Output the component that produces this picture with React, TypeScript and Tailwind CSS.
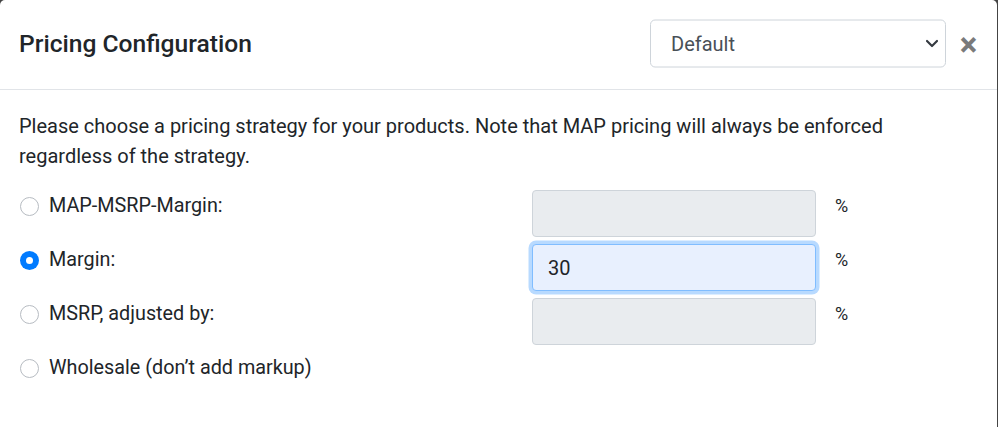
import { ChevronDown } from "lucide-react";

type Option = {
  label: string;
  checked?: boolean;
  input?: "disabled" | "active";
  value?: string;
};

const options: Option[] = [
  { label: "MAP-MSRP-Margin:", input: "disabled" },
  { label: "Margin:", checked: true, input: "active", value: "30" },
  { label: "MSRP, adjusted by:", input: "disabled" },
  { label: "Wholesale (don’t add markup)" },
];

function Radio({ checked }: { checked?: boolean }) {
  return checked ? (
    <span className="flex h-[19px] w-[19px] items-center justify-center rounded-full bg-[#007bff]">
      <span className="h-[7px] w-[7px] rounded-full bg-white" />
    </span>
  ) : (
    <span className="h-[19px] w-[19px] rounded-full border border-[#b7bcc2] bg-white" />
  );
}

export default function App() {
  return (
    <div
      className="flex h-[427px] w-[998px] bg-[#444] text-[#212529]"
      style={{ fontFamily: "Roboto, 'Liberation Sans', sans-serif" }}
    >
      <div className="h-full w-[997px] rounded-t-[5px] bg-white">
        <div className="flex h-[90px] items-center border-b border-[#e1e4e8] pl-[19px] pr-[21px]">
          <h5 className="text-[24.6px] font-medium leading-none">Pricing Configuration</h5>
          <div className="ml-auto flex h-[48px] w-[296px] -translate-y-[1.5px] items-center justify-between rounded-[5px] border border-[#ced4da] pl-[20px] pr-[3px] text-[20px] text-[#495057]">
            <span>Default</span>
            <ChevronDown className="h-[20px] w-[20px] text-[#343a40]" strokeWidth={2.6} />
          </div>
          <span className="ml-[15px] flex w-[15px] justify-center text-[33px] font-bold leading-none text-[#7a7a7a]">
            ×
          </span>
        </div>

        <div className="px-[19px] pt-[21px]">
          <p className="text-[20px] leading-[30px]">
            Please choose a pricing strategy for your products. Note that MAP pricing will always be enforced
            <br />
            regardless of the strategy.
          </p>

          <div className="mt-[19px] grid grid-cols-[513px_284px_auto] gap-y-[7px]">
            {options.map((o) => (
              <div key={o.label} className="contents">
                <div className="flex h-[32px] items-center gap-[10px] pl-px text-[19.8px]">
                  <Radio checked={o.checked} />
                  <span>{o.label}</span>
                </div>
                {o.input ? (
                  <div
                    className={
                      o.input === "active"
                        ? "flex h-[47px] items-center rounded-[4px] border border-[#80bdff] bg-[#e8f0fe] pl-[15px] text-[20px] shadow-[0_0_0_3.5px_rgba(0,123,255,0.28)]"
                        : "h-[47px] rounded-[4px] border border-[#ced4da] bg-[#e9ecef]"
                    }
                  >
                    {o.value}
                  </div>
                ) : (
                  <div className="h-[28px]" />
                )}
                {o.input ? (
                  <div className="flex h-[30px] items-center pl-[19px] text-[18px]">%</div>
                ) : (
                  <div />
                )}
              </div>
            ))}
          </div>
        </div>
      </div>
    </div>
  );
}
